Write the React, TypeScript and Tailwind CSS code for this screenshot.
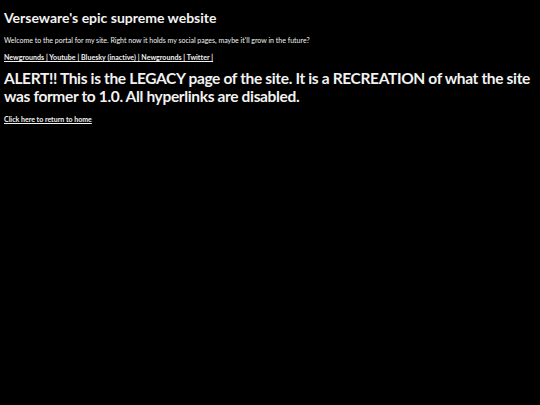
export default function App() {
  return (
    <main
      className="min-h-screen w-full bg-black px-[4px] text-[#f2f2f2]"
      style={{ fontFamily: 'Lato, "Open Sans", sans-serif' }}
    >
      <h1 className="pt-[9px] text-[14px] font-bold leading-[17px]">Verseware's epic supreme website</h1>
      <p className="mt-[10px] text-[7px] leading-[9px]">
        Welcome to the portal for my site. Right now it holds my social pages, maybe it'll grow in the future?
      </p>
      <p className="mt-[8px] text-[7px] font-bold leading-[9px] tracking-[0.05px] underline">
        Newgrounds | Youtube | Bluesky (inactive) | Newgrounds | Twitter |
      </p>
      <h2 className="mt-[7px] text-[15.5px] font-bold leading-[18px] tracking-[-0.35px]">
        ALERT!! This is the LEGACY page of the site. It is a RECREATION of what the site was former to 1.0. All
        hyperlinks are disabled.
      </h2>
      <p className="mt-[10px] text-[7px] font-bold leading-[8px] underline">Click here to return to home</p>
    </main>
  );
}
